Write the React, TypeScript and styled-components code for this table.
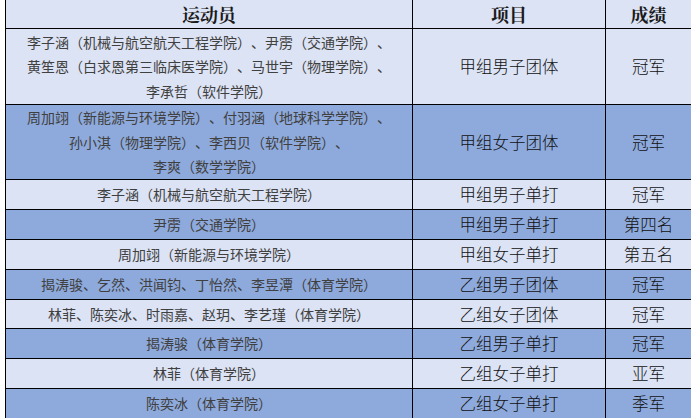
import React from "react";
import styled, { createGlobalStyle } from "styled-components";

interface IResult {
  athletes: string[];
  event: string;
  result: string;
  height: number;
}

const results: IResult[] = [
  {
    athletes: [
      "李子涵（机械与航空航天工程学院）、尹雳（交通学院）、",
      "黄笙恩（白求恩第三临床医学院）、马世宇（物理学院）、",
      "李承哲（软件学院）",
    ],
    event: "甲组男子团体",
    result: "冠军",
    height: 76,
  },
  {
    athletes: [
      "周加翊（新能源与环境学院）、付羽涵（地球科学学院）、",
      "孙小淇（物理学院）、李西贝（软件学院）、",
      "李爽（数学学院）",
    ],
    event: "甲组女子团体",
    result: "冠军",
    height: 75,
  },
  { athletes: ["李子涵（机械与航空航天工程学院）"], event: "甲组男子单打", result: "冠军", height: 30 },
  { athletes: ["尹雳（交通学院）"], event: "甲组男子单打", result: "第四名", height: 30 },
  { athletes: ["周加翊（新能源与环境学院）"], event: "甲组女子单打", result: "第五名", height: 30 },
  {
    athletes: ["揭涛骏、乞然、洪闻钧、丁怡然、李昱潭（体育学院）"],
    event: "乙组男子团体",
    result: "冠军",
    height: 30,
  },
  {
    athletes: ["林菲、陈奕冰、时雨嘉、赵玥、李艺瑾（体育学院）"],
    event: "乙组女子团体",
    result: "冠军",
    height: 29,
  },
  { athletes: ["揭涛骏（体育学院）"], event: "乙组男子单打", result: "冠军", height: 30 },
  { athletes: ["林菲（体育学院）"], event: "乙组女子单打", result: "亚军", height: 30 },
  { athletes: ["陈奕冰（体育学院）"], event: "乙组女子单打", result: "季军", height: 30 },
];

const GlobalStyle = createGlobalStyle`
  html, body {
    margin: 0;
    padding: 0;
    background: #ffffff;
  }
  body {
    font-family: "Noto Sans CJK SC", "Noto Sans", sans-serif;
    text-spacing-trim: space-all;
  }
`;

const SPage = styled.div`
  padding-left: 5px;
  width: 686px;
  overflow: hidden;
  height: 418px;
`;

const STable = styled.table`
  width: 686px;
  border-collapse: collapse;
  table-layout: fixed;
`;

const SHeadCell = styled.th`
  height: 28px;
  padding: 0;
  background: #dce3f4;
  border: 1px solid #000;
  border-top: none;
  font-family: "Noto Serif CJK SC", "Noto Sans CJK SC", serif;
  font-weight: 700;
  font-size: 18px;
  line-height: 28px;
  color: #1a1a1a;
  text-align: center;
`;

const SRow = styled.tr<{ $blue: boolean }>`
  background: ${(p) => (p.$blue ? "#8eaadc" : "#dce3f4")};
`;

const SCell = styled.td<{ $muted?: boolean }>`
  padding: 0 2px;
  border: 1px solid #000;
  text-align: center;
  vertical-align: middle;
  font-size: ${(p) => (p.$muted ? "14px" : "16.5px")};
  font-weight: ${(p) => (p.$muted ? 400 : 300)};
  line-height: 24.5px;
  color: ${(p) => (p.$muted ? "#404040" : "#111")};
  white-space: nowrap;
  text-spacing-trim: space-all;
`;

export default function App() {
  return (
    <SPage>
      <GlobalStyle />
      <STable>
        <colgroup>
          <col style={{ width: 407 }} />
          <col style={{ width: 193 }} />
          <col style={{ width: 86 }} />
        </colgroup>
        <thead>
          <tr>
            <SHeadCell>运动员</SHeadCell>
            <SHeadCell>项目</SHeadCell>
            <SHeadCell>成绩</SHeadCell>
          </tr>
        </thead>
        <tbody>
          {results.map((row, i) => (
            <SRow key={i} $blue={i % 2 === 1} style={{ height: row.height }}>
              <SCell $muted>
                {row.athletes.map((line, j) => (
                  <React.Fragment key={j}>
                    {j > 0 && <br />}
                    {line}
                  </React.Fragment>
                ))}
              </SCell>
              <SCell>{row.event}</SCell>
              <SCell>{row.result}</SCell>
            </SRow>
          ))}
        </tbody>
      </STable>
    </SPage>
  );
}
